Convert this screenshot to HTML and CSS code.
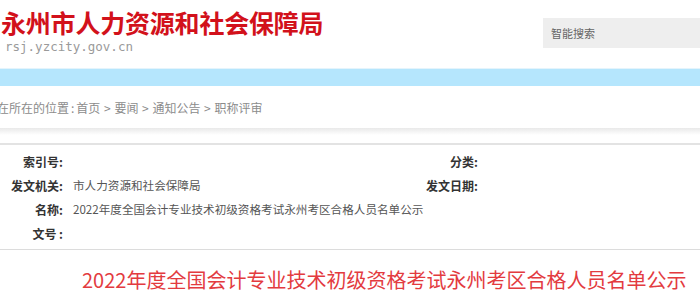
FILE: index.html
```html
<!DOCTYPE html>
<html lang="zh-CN">
<head>
<meta charset="utf-8">
<title>永州市人力资源和社会保障局</title>
<link rel="stylesheet" href="styles.css">
</head>
<body>
<header class="header">
  <div class="logo">
    <div class="logo-title">永州市人力资源和社会保障局</div>
    <div class="logo-domain">rsj.yzcity.gov.cn</div>
  </div>
  <div class="search">智能搜索</div>
</header>
<div class="nav-bar"></div>
<div class="crumbs"><span class="crumbs-text">您现在所在的位置<span class="colon">:</span>首页 &gt; 要闻 &gt; 通知公告 &gt; 职称评审</span></div>
<div class="shadow"></div>
<section class="info">
  <div class="lbl">索引号:</div><div class="val"></div><div class="lbl">分类:</div><div class="val"></div>
  <div class="lbl">发文机关:</div><div class="val">市人力资源和社会保障局</div><div class="lbl">发文日期:</div><div class="val"></div>
  <div class="lbl">名称:</div><div class="val span3">2022年度全国会计专业技术初级资格考试永州考区合格人员名单公示</div>
  <div class="lbl">文号 :</div><div class="val span3"></div>
</section>
<h1 class="article-title">2022年度全国会计专业技术初级资格考试永州考区合格人员名单公示</h1>
</body>
</html>
```
FILE: styles.css
```css
html, body {
  margin: 0;
  padding: 0;
  background: #fff;
  font-family: "Noto Sans CJK SC", "Noto Sans", sans-serif;
  overflow: hidden;
}
.header {
  display: flex;
  justify-content: space-between;
  align-items: flex-start;
  height: 68px;
  box-sizing: border-box;
  padding-top: 7px;
}
.logo {
  padding-left: 1px;
}
.logo-title {
  font-size: 25px;
  line-height: 31px;
  font-weight: 700;
  color: #d2111b;
  white-space: nowrap;
  letter-spacing: -0.2px;
}
.logo-domain {
  font-family: "DejaVu Sans Mono", "Liberation Mono", monospace;
  font-size: 12.5px;
  line-height: 16px;
  color: #9a9a9a;
  padding-left: 4px;
  margin-top: 1px;
}
.search {
  width: 157px;
  height: 30px;
  margin-top: 11px;
  box-sizing: border-box;
  padding-left: 8px;
  background: #eeeeee;
  color: #666;
  font-size: 11px;
  line-height: 30px;
}
.nav-bar {
  height: 17px;
  background: #b5e6fd;
  border-top: 1px solid #e4f4fc;
}
.crumbs {
  height: 42px;
  overflow: hidden;
  display: flex;
  align-items: center;
}
.crumbs-text {
  margin-left: -27px;
  font-size: 12px;
  color: #8c8c8c;
  white-space: nowrap;
  word-spacing: 1px;
}
.colon {
  padding: 0 2px;
}
.shadow {
  height: 17px;
  background: linear-gradient(#e9e9e9, #ffffff 7px, #ffffff 15px, #e3e3e3 15px);
}
.info {
  display: grid;
  grid-template-columns: 63px 317px 78px 1fr;
  column-gap: 10px;
  grid-auto-rows: 24px;
  padding: 4px 0 4px;
  border-bottom: 1px solid #dcdcdc;
  font-size: 12px;
  align-items: center;
}
.lbl {
  text-align: right;
  font-weight: 700;
  color: #333;
  white-space: nowrap;
}
.val {
  font-size: 11.6px;
  color: #555;
  white-space: nowrap;
}
.span3 {
  grid-column: 2 / span 3;
}
.article-title {
  margin: 15px 0 0;
  padding-left: 82px;
  font-size: 20px;
  line-height: 30px;
  font-weight: 400;
  color: #e33b3f;
  white-space: nowrap;
}
```
